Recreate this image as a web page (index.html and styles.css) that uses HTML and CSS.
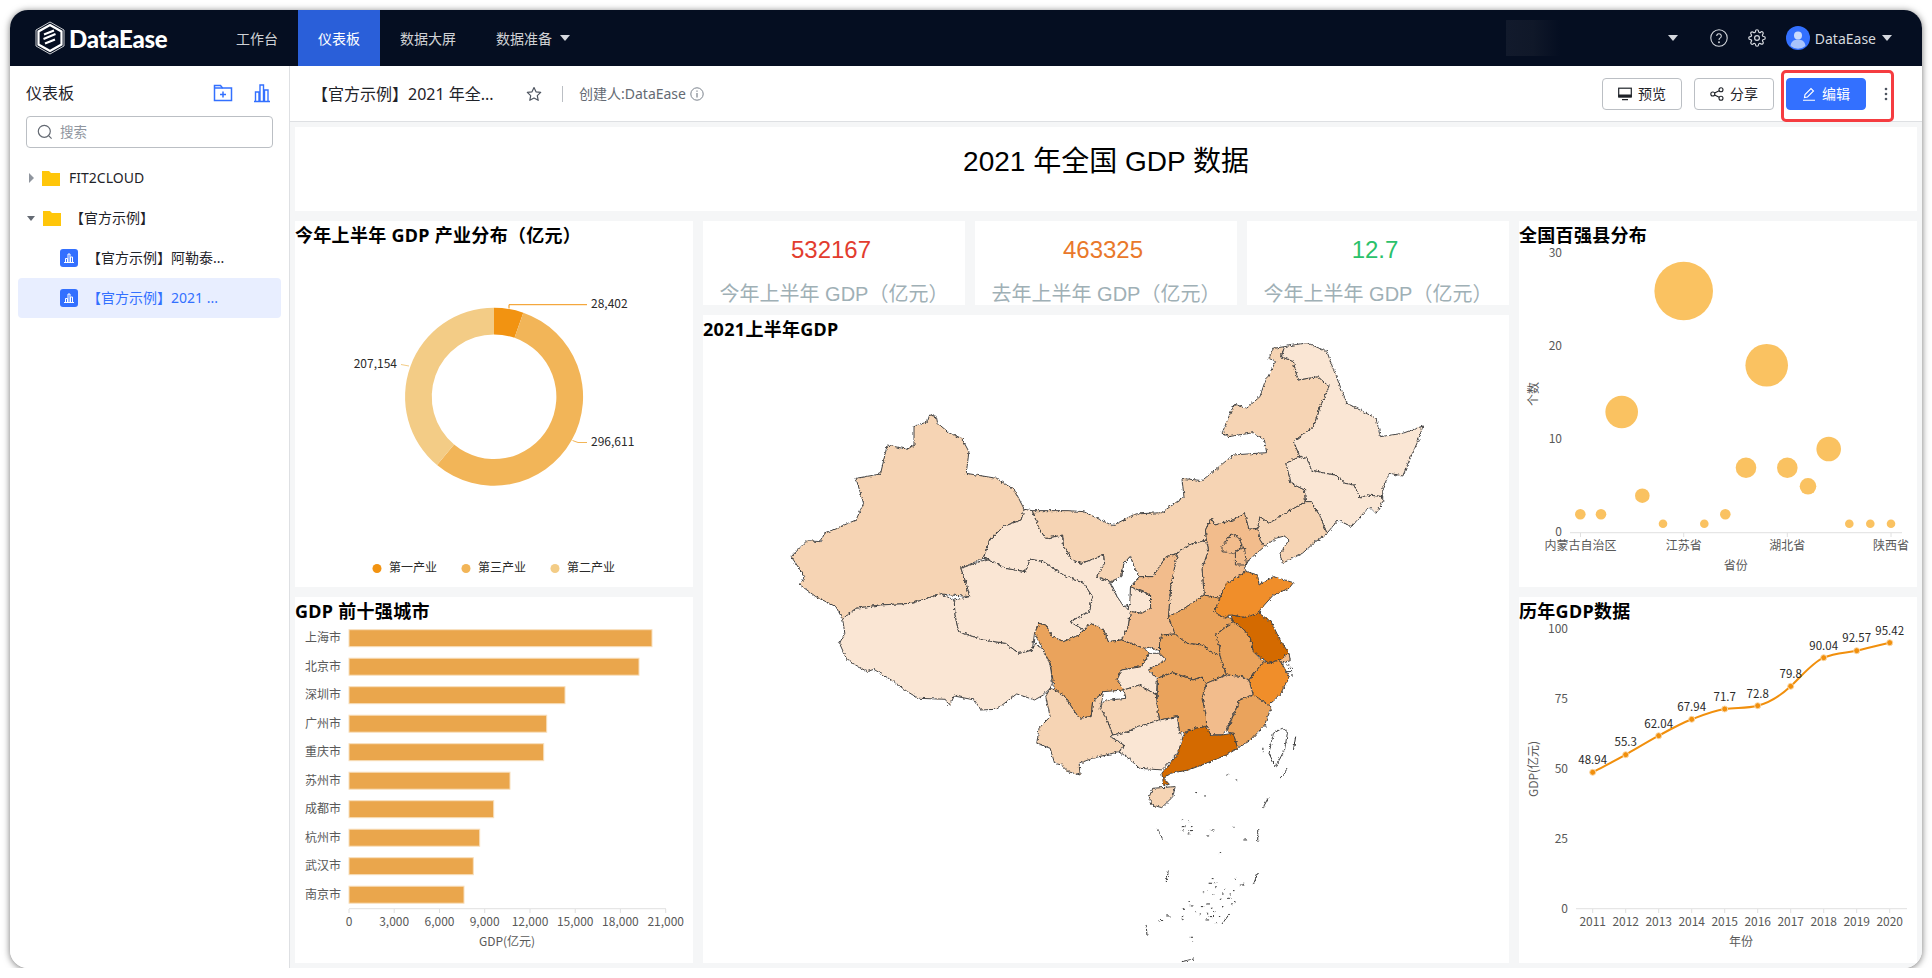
FILE: index.html
```html
<!DOCTYPE html>
<html lang="zh-CN">
<head>
    <meta charset="UTF-8">
    <title>DataEase 仪表板</title>
    <link rel="stylesheet" href="styles.css">
</head>
<body>
<div class="window">

    <!-- Top navigation -->
    <header class="header">
        <div class="logo">
            <svg width="30" height="34" viewBox="0 0 30 34" fill="none" stroke="#fff">
                <path d="M15 1 29 9v16l-14 8-14-8V9z" stroke-width=".8"/>
                <path d="M15 4 26.5 10.5v13L15 30 3.500 23.500v-13z" stroke-width="2.200"/>
                <path d="M9 13.500l10-4M8.500 18l12-5M10 22.500l10-4" stroke-width="2"/>
            </svg>
            <span class="logo-text">DataEase</span>
        </div>
        <nav class="nav">
            <a class="nav-item">工作台</a>
            <a class="nav-item active">仪表板</a>
            <a class="nav-item">数据大屏</a>
            <a class="nav-item">数据准备<i class="caret nav-caret"></i></a>
        </nav>
        <div class="header-right">
            <div class="blur-box"></div>
            <i class="caret org-caret"></i>
            <svg class="head-icon" width="18" height="18" viewBox="0 0 18 18" fill="none" stroke="#d5d8de" stroke-width="1.100">
                <circle cx="9" cy="9" r="8.200"/>
                <path d="M6.700 7a2.300 2.300 0 1 1 3.600 1.900c-.8.500-1.300 1-1.300 2"/>
                <circle cx="9" cy="13.200" r=".4"/>
            </svg>
            <svg class="head-icon" width="18" height="18" viewBox="0 0 24 24" fill="none" stroke="#d5d8de" stroke-width="1.600">
                <circle cx="12" cy="12" r="3.200"/>
                <path d="M19.400 15a1.650 1.650 0 0 0 .33 1.820l.06.06a2 2 0 0 1 0 2.830 2 2 0 0 1-2.830 0l-.06-.06a1.650 1.650 0 0 0-1.820-.33 1.650 1.650 0 0 0-1 1.510V21a2 2 0 0 1-2 2 2 2 0 0 1-2-2v-.09A1.650 1.650 0 0 0 9 19.400a1.650 1.650 0 0 0-1.820.33l-.06.06a2 2 0 0 1-2.830 0 2 2 0 0 1 0-2.830l.06-.06a1.650 1.650 0 0 0 .33-1.820 1.650 1.650 0 0 0-1.510-1H3a2 2 0 0 1-2-2 2 2 0 0 1 2-2h.09A1.650 1.650 0 0 0 4.600 9a1.650 1.650 0 0 0-.33-1.820l-.06-.06a2 2 0 0 1 0-2.830 2 2 0 0 1 2.830 0l.06.06a1.650 1.650 0 0 0 1.820.33H9a1.650 1.650 0 0 0 1-1.510V3a2 2 0 0 1 2-2 2 2 0 0 1 2 2v.09a1.650 1.650 0 0 0 1 1.510 1.650 1.650 0 0 0 1.820-.33l.06-.06a2 2 0 0 1 2.830 0 2 2 0 0 1 0 2.830l-.06.06a1.650 1.650 0 0 0-.33 1.820V9a1.650 1.650 0 0 0 1.510 1H21a2 2 0 0 1 2 2 2 2 0 0 1-2 2h-.09a1.650 1.650 0 0 0-1.510 1z"/>
            </svg>
            <svg class="avatar" width="24" height="24" viewBox="0 0 24 24">
                <circle cx="12" cy="12" r="12" fill="#3370ff"/>
                <circle cx="12" cy="9.500" r="4" fill="#c9dafc"/>
                <path d="M4.500 20c.5-4.500 3.500-6.500 7.500-6.500s7 2 7.500 6.500a12 12 0 0 1-15 0z" fill="#a9c4fb"/>
            </svg>
            <span class="user-name">DataEase</span>
            <i class="caret user-caret"></i>
        </div>
    </header>

    <div class="body-wrap">

        <!-- Left tree -->
        <aside class="sidebar">
            <div class="side-head">
                <span class="side-title">仪表板</span>
                <svg class="side-icon" width="20" height="18" viewBox="0 0 20 18" fill="none" stroke="#3370ff" stroke-width="1.500">
                    <path d="M1.500 16.500V1.500h6l2 2.500h9v12.500z"/>
                    <path d="M1.500 4h8M10 7.500v6M7 10.500h6"/>
                </svg>
                <svg class="side-icon chart-add" width="18" height="20" viewBox="0 0 18 20" fill="none" stroke="#3370ff" stroke-width="1.400">
                    <path d="M1 18.500h16M2.500 18.500V9h3.500v9.500M7 18.500V2h3.500v16.500M11.500 18.500V7H15v11.500"/>
                </svg>
            </div>
            <div class="search">
                <svg width="16" height="16" viewBox="0 0 16 16" fill="none" stroke="#646a73" stroke-width="1.200">
                    <circle cx="7.300" cy="7.300" r="6"/>
                    <path d="M11.800 11.800l2.800 2.800"/>
                </svg>
                <span class="search-text">搜索</span>
            </div>
            <ul class="tree">
                <li class="tree-row">
                    <i class="tree-caret right"></i>
                    <svg class="folder" width="18" height="16" viewBox="0 0 18 16"><path d="M0 1h7l2 2h9v13H0z" fill="#ffc60a"/></svg>
                    <span class="row-text">FIT2CLOUD</span>
                </li>
                <li class="tree-row">
                    <i class="tree-caret down"></i>
                    <svg class="folder" width="18" height="16" viewBox="0 0 18 16"><path d="M0 1h7l2 2h9v13H0z" fill="#ffc60a"/></svg>
                    <span class="row-text">【官方示例】</span>
                </li>
                <li class="tree-row child">
                    <svg width="18" height="18" viewBox="0 0 18 18"><rect width="18" height="18" rx="3" fill="#3370ff"/><path d="M4 13.500h10M5.500 13.500v-4h2v4M8 13.500v-8.500h2v8.500M10.500 13.500v-5.500h2v5.500" fill="none" stroke="#fff"/></svg>
                    <span class="row-text">【官方示例】阿勒泰...</span>
                </li>
                <li class="tree-row child selected">
                    <svg width="18" height="18" viewBox="0 0 18 18"><rect width="18" height="18" rx="3" fill="#3370ff"/><path d="M4 13.500h10M5.500 13.500v-4h2v4M8 13.500v-8.500h2v8.500M10.500 13.500v-5.500h2v5.500" fill="none" stroke="#fff"/></svg>
                    <span class="row-text">【官方示例】2021 ...</span>
                </li>
            </ul>
        </aside>

        <main class="content">
            <!-- Title bar -->
            <div class="topbar">
                <span class="board-name">【官方示例】2021 年全...</span>
                <svg class="star" width="16" height="16" viewBox="0 0 16 16" fill="none" stroke="#4e5560" stroke-width="1.200" stroke-linejoin="round">
                    <path d="M8 1.500l2 4.300 4.700.6-3.400 3.200.9 4.700L8 12l-4.200 2.300.9-4.700L1.300 6.400 6 5.800z"/>
                </svg>
                <span class="divider"></span>
                <span class="creator">创建人:DataEase</span>
                <svg class="info" width="14" height="14" viewBox="0 0 14 14" fill="none" stroke="#7b828c">
                    <circle cx="7" cy="7" r="6.200"/>
                    <path d="M7 6v4.500M7 3.500v1.300" stroke-width="1.200"/>
                </svg>
                <div class="actions">
                    <button class="btn">
                        <svg width="14" height="14" viewBox="0 0 14 14" fill="none" stroke="#1f2329" stroke-width="1.200"><rect x=".7" y="1.200" width="12.600" height="8.600"/><path d="M.7 8h12.600M4 12.600h6" /><path d="M1 8.500h12v1.500H1z" fill="#1f2329"/></svg>
                        <span class="btn-text">预览</span>
                    </button>
                    <button class="btn">
                        <svg width="14" height="14" viewBox="0 0 14 14" fill="none" stroke="#1f2329" stroke-width="1.100"><circle cx="2.800" cy="7" r="2"/><circle cx="11" cy="2.800" r="2"/><circle cx="11" cy="11.200" r="2"/><path d="M4.600 6.100l4.600-2.400M4.600 7.900l4.600 2.400"/></svg>
                        <span class="btn-text">分享</span>
                    </button>
                    <button class="btn primary">
                        <svg width="14" height="14" viewBox="0 0 14 14" fill="none" stroke="#fff" stroke-width="1.100"><path d="M2.500 10.500l.5-3 6-6 2.500 2.500-6 6zM1 13.300h12"/></svg>
                        <span class="btn-text">编辑</span>
                    </button>
                    <svg class="more" width="4" height="14" viewBox="0 0 4 14" fill="#4e5560"><circle cx="2" cy="2" r="1.300"/><circle cx="2" cy="7" r="1.300"/><circle cx="2" cy="12" r="1.300"/></svg>
                </div>
                <div class="red-mark"></div>
            </div>

            <!-- Dashboard canvas -->
            <div class="board">
                <div class="panel title-panel">2021 年全国 GDP 数据</div>

                <section class="panel tall">
                    <h3 class="panel-title">今年上半年 GDP 产业分布（亿元）</h3>
                    <svg class="chart" width="398" height="338" viewBox="295 249 398 338">
                        <path d="M494 307.700A89 89 0 0 1 523.300 312.650L514.500 337.860A62.300 62.300 0 0 0 494 334.400Z" fill="#f29311"/>
                        <path d="M523.300 312.650A89 89 0 1 1 437 465L454.100 444.500A62.300 62.300 0 1 0 514.500 337.860Z" fill="#f2b558"/>
                        <path d="M437 465A89 89 0 0 1 494 307.700L494 334.400A62.300 62.300 0 0 0 454.100 444.500Z" fill="#f3cc86"/>
                        <path d="M509 308.500V304.700H587" fill="none" stroke="#f29311"/>
                        <path d="M572.500 440.500L578 442.500H587" fill="none" stroke="#f2b558"/>
                        <path d="M409 366L401 364.500" fill="none" stroke="#f3cc86"/>
                        <text class="val" x="591" y="308">28,402</text>
                        <text class="val" x="591" y="446">296,611</text>
                        <text class="val end" x="397" y="368">207,154</text>
                        <circle cx="377" cy="568.500" r="4.500" fill="#f29311"/>
                        <text class="val" x="389" y="572">第一产业</text>
                        <circle cx="466" cy="568.500" r="4.500" fill="#f2b558"/>
                        <text class="val" x="478" y="572">第三产业</text>
                        <circle cx="555" cy="568.500" r="4.500" fill="#f3cc86"/>
                        <text class="val" x="567" y="572">第二产业</text>
                    </svg>
                </section>

                <div class="cards">
                    <div class="panel kpi"><div class="kpi-num red">532167</div><div class="kpi-label">今年上半年 GDP（亿元）</div></div>
                    <div class="panel kpi"><div class="kpi-num orange">463325</div><div class="kpi-label">去年上半年 GDP（亿元）</div></div>
                    <div class="panel kpi"><div class="kpi-num green">12.7</div><div class="kpi-label">今年上半年 GDP（亿元）</div></div>
                </div>

                <section class="panel tall">
                    <h3 class="panel-title">全国百强县分布</h3>
                    <svg class="chart" width="398" height="338" viewBox="1519 249 398 338">
                        <text class="axis end" x="1562" y="257">30</text>
                        <text class="axis end" x="1562" y="350">20</text>
                        <text class="axis end" x="1562" y="443">10</text>
                        <text class="axis end" x="1562" y="536">0</text>
                        <path class="axis-line" d="M1570 532.700H1902M1580.500 533V537M1683.700 533V537M1787.300 533V537M1891 533V537"/>
                        <g fill="#fac261">
                            <circle cx="1580.300" cy="514.300" r="5.300"/>
                            <circle cx="1601" cy="514.300" r="5.300"/>
                            <circle cx="1621.700" cy="412" r="16.300"/>
                            <circle cx="1642.300" cy="495.700" r="7.300"/>
                            <circle cx="1663" cy="523.700" r="4.300"/>
                            <circle cx="1683.700" cy="291" r="29.300"/>
                            <circle cx="1704.300" cy="523.700" r="4.300"/>
                            <circle cx="1725.300" cy="514.300" r="5.300"/>
                            <circle cx="1746" cy="467.700" r="10.300"/>
                            <circle cx="1766.700" cy="365.300" r="21.300"/>
                            <circle cx="1787.300" cy="467.700" r="10.300"/>
                            <circle cx="1808" cy="486.300" r="8.300"/>
                            <circle cx="1828.700" cy="449" r="12.300"/>
                            <circle cx="1849.300" cy="523.700" r="4.300"/>
                            <circle cx="1870.300" cy="523.700" r="4.300"/>
                            <circle cx="1891" cy="523.700" r="4.300"/>
                        </g>
                        <text class="axis mid" x="1580.500" y="550">内蒙古自治区</text>
                        <text class="axis mid" x="1683.700" y="550">江苏省</text>
                        <text class="axis mid" x="1787.300" y="550">湖北省</text>
                        <text class="axis mid" x="1891" y="550">陕西省</text>
                        <text class="axis mid" x="1735.700" y="570">省份</text>
                        <text class="axis mid" transform="translate(1538 394) rotate(-90)">个数</text>
                    </svg>
                </section>

                <section class="panel map-panel">
                    <h3 class="panel-title">2021上半年GDP</h3>
                    <svg class="chart" width="806" height="620" viewBox="703 343 806 620">
                        <defs>
                            <filter id="rough" filterUnits="userSpaceOnUse" x="703" y="343" width="806" height="620">
                                <feTurbulence type="fractalNoise" baseFrequency="0.35" numOctaves="3" seed="4"/>
                                <feDisplacementMap in="SourceGraphic" scale="3.500" xChannelSelector="R" yChannelSelector="G"/>
                            </filter>
                        </defs>
                        <g filter="url(#rough)">
                        <g class="china" transform="translate(760 320) scale(.4464 .3333)">
                            <polygon class="c2" points="380,285 395,290 398,310 425,340 452,355 468,395 462,460 530,475 570,510 592,568 585,600 545,620 515,660 500,715 450,745 462,790 470,830 405,822 340,850 270,855 215,865 185,897 170,860 125,830 90,795 100,770 70,710 105,662 135,665 145,640 215,600 232,550 215,475 270,462 285,375 330,388 345,375 345,320 375,305"/>
                            <polygon class="c1" points="185,897 215,865 270,855 340,850 405,822 435,840 437,885 440,905 445,935 500,960 550,970 580,1000 610,990 618,968 645,1010 652,1050 655,1090 650,1105 635,1125 615,1140 575,1122 530,1168 495,1170 480,1140 435,1128 425,1158 415,1138 355,1135 330,1115 300,1085 255,1048 240,1055 195,1020 178,970 190,940"/>
                            <polygon class="c1" points="450,745 510,717 550,745 595,755 605,717 635,725 680,765 725,790 745,830 738,875 695,905 725,930 715,945 680,965 655,950 640,915 625,910 615,940 610,990 580,1000 550,970 500,960 445,935 437,885 435,840 470,830 462,790"/>
                            <polygon class="c1" points="592,568 610,572 625,625 640,655 678,645 680,680 700,720 720,730 770,705 772,730 755,770 782,785 800,830 825,870 830,800 875,825 875,865 855,880 830,875 825,920 810,960 780,965 770,930 740,910 715,945 725,930 695,905 738,875 745,830 725,790 680,765 635,725 605,717 595,755 550,745 510,717 500,715 515,660 545,620 585,600"/>
                            <polygon class="c0" points="785,785 810,770 815,730 830,708 838,740 850,770 830,800 828,855 815,860 800,830"/>
                            <polygon class="c2" points="610,572 690,572 725,575 790,617 840,582 900,578 950,530 945,475 990,482 1015,455 1060,405 1135,398 1130,360 1105,338 1050,350 1035,340 1062,252 1090,265 1120,230 1130,190 1155,125 1140,115 1150,85 1175,80 1168,110 1195,125 1205,180 1250,170 1275,200 1255,260 1240,320 1195,365 1210,410 1178,430 1190,490 1220,510 1222,545 1190,570 1140,610 1120,590 1115,625 1095,628 1085,578 1060,600 1020,615 1010,595 998,630 1000,660 960,675 935,700 910,710 880,770 850,770 838,740 830,708 815,730 810,770 785,785 755,770 772,730 770,705 720,730 700,720 680,680 678,645 640,655 625,625"/>
                            <polygon class="c1" points="1175,80 1225,68 1270,95 1285,150 1315,250 1380,295 1390,350 1440,340 1485,318 1475,360 1455,420 1440,468 1410,460 1395,505 1395,530 1360,525 1345,535 1330,495 1310,490 1290,465 1265,460 1235,450 1225,415 1210,410 1195,365 1240,320 1255,260 1275,200 1250,170 1205,180 1195,125 1168,110"/>
                            <polygon class="c1" points="1178,430 1210,410 1225,415 1235,450 1265,460 1290,465 1310,490 1330,495 1345,535 1360,525 1395,530 1395,545 1380,580 1365,560 1325,620 1295,600 1270,640 1255,590 1235,545 1222,545 1220,510 1190,490"/>
                            <polygon class="c2" points="1140,610 1190,570 1222,545 1235,545 1255,590 1270,640 1240,670 1215,700 1170,730 1165,700 1185,660 1175,648 1155,655 1130,680 1120,660 1115,625 1120,590"/>
                            <polygon class="c3" points="998,630 1010,595 1020,615 1060,600 1085,578 1095,628 1115,625 1120,660 1130,680 1095,720 1085,745 1090,755 1045,790 1030,835 995,825 990,745 1005,690 1000,660"/>
                            <polygon class="c3" points="1035,680 1055,642 1075,655 1080,680 1060,700 1035,695"/>
                            <polygon class="c3" points="1065,695 1085,680 1090,735 1065,735"/>
                            <polygon class="c2" points="935,700 960,675 1000,660 1005,690 990,745 995,825 945,870 915,890 920,800"/>
                            <polygon class="c3" points="880,770 910,710 935,700 920,800 915,890 930,942 900,945 895,975 900,995 872,982 860,985 810,960 825,920 830,875 855,880 875,865 875,825 830,800 850,770"/>
                            <polygon class="c4" points="915,890 945,870 995,825 1030,835 1018,875 1055,895 1060,905 1040,925 1020,945 1030,980 1030,1005 1010,995 990,975 955,970 930,942"/>
                            <polygon class="c4" points="900,945 930,942 955,970 990,975 1010,995 1030,1005 1035,1025 1045,1065 1000,1090 990,1070 970,1080 925,1058 890,1075 870,1050 910,1020 895,1000 895,970"/>
                            <polygon class="c4" points="1060,905 1085,930 1100,960 1105,995 1128,1025 1095,1080 1080,1070 1045,1065 1035,1025 1030,1005 1030,980 1020,945 1040,925"/>
                            <polygon class="c6" points="1055,885 1085,892 1118,880 1145,905 1165,960 1185,1000 1165,1020 1140,1030 1105,995 1100,960 1085,930 1060,905"/>
                            <polygon class="c3" points="1165,1020 1185,1000 1188,1022 1170,1030"/>
                            <polygon class="c5" points="1030,835 1045,790 1090,755 1115,765 1118,795 1150,770 1195,788 1185,805 1150,825 1120,870 1118,880 1085,892 1055,885 1040,895 1018,875"/>
                            <polygon class="c5" points="1128,1025 1140,1030 1165,1020 1185,1070 1165,1125 1140,1155 1105,1125 1095,1080"/>
                            <polygon class="c3" points="1045,1065 1080,1070 1095,1080 1105,1125 1075,1140 1045,1230 1035,1245 1010,1245 1000,1220 1000,1190 990,1135 1000,1090"/>
                            <polygon class="c4" points="1105,1125 1140,1155 1145,1165 1130,1215 1100,1260 1070,1285 1060,1240 1045,1235 1075,1140"/>
                            <polygon class="c4" points="890,1075 925,1058 970,1080 990,1070 1000,1090 990,1135 1000,1190 1000,1220 975,1225 955,1235 940,1240 935,1190 895,1200 890,1160"/>
                            <polygon class="c4" points="615,940 625,910 640,915 655,950 680,965 715,945 740,910 770,930 780,965 810,960 860,985 872,1000 855,1040 810,1050 800,1080 815,1110 770,1115 745,1145 742,1190 715,1195 680,1125 660,1110 650,1030"/>
                            <polygon class="c1" points="872,1000 895,1000 910,1020 870,1050 890,1075 888,1125 850,1095 815,1110 800,1080 810,1050 855,1040"/>
                            <polygon class="c2" points="815,1110 850,1095 888,1125 890,1160 895,1200 860,1215 845,1220 825,1235 790,1245 775,1190 760,1165 770,1145 785,1140 820,1135"/>
                            <polygon class="c2" points="650,1105 660,1110 680,1125 715,1195 742,1190 745,1145 770,1115 762,1165 775,1190 790,1245 785,1250 815,1275 805,1295 745,1315 715,1330 717,1365 690,1355 675,1335 660,1330 650,1285 620,1270 625,1225 650,1190 640,1130"/>
                            <polygon class="c1" points="790,1245 825,1235 845,1220 860,1215 895,1200 935,1190 940,1240 950,1250 935,1300 900,1350 850,1345 830,1320 805,1295 815,1275 785,1250"/>
                            <polygon class="c6" points="950,1240 975,1225 1000,1220 1010,1245 1035,1245 1060,1240 1070,1285 1045,1305 990,1335 960,1350 920,1360 905,1375 917,1393 905,1395 900,1360 935,1305"/>
                            <polygon class="c2" points="880,1405 930,1400 925,1430 900,1463 878,1455 872,1430"/>
                            <polygon class="c0" points="1150,1240 1170,1225 1182,1235 1175,1290 1155,1340 1140,1300"/>
                            <path class="isles" d="M1200 1250L1195 1290M1182 1345L1165 1375M1138 1435L1125 1468M890 1525L903 1560M1115 1530V1565M915 1652L910 1685M1115 1660L1105 1695M1050 1785L1035 1812M865 1815L867 1848M945 1925L972 1917"/>
                            <path class="dots" d="M1180 1035h6M1185 1045h8M1180 1055h12M1188 1065h6M1130 1218h5M1115 1235h4M1125 1285h3M1125 1295h3M1045 1365h4M1065 1380h4M975 1418h4M995 1428h4M945 1500h3M960 1505h4M945 1520h6M965 1520h4M945 1530h4M962 1532h6M958 1542h4M1010 1530h8M1000 1548h6M1060 1522h3M1085 1560h4M1030 1598h3M1012 1676h4M1005 1690h8M1000 1710h3M1020 1700h3M1035 1722h4M1058 1712h5M1075 1695h8M1015 1725h3M1048 1735h6M1000 1752h8M1055 1752h3M965 1758h6M945 1768h6M910 1788h10M895 1802h8M945 1790h3M1005 1790h12M998 1800h8M1020 1808h3M965 1852h3M968 1862h3M968 1975h4M1062 1678h3M1082 1690h3M1018 1688h4M992 1716h3M1040 1708h3M1052 1722h3M1030 1738h3M1062 1745h3M990 1760h5M1010 1765h4M1035 1760h3M975 1775h3M985 1782h3M960 1742h3M1000 1780h4M1028 1790h3M945 1798h4M1015 1775h3"/>
                        </g>
                        </g>
                    </svg>
                </section>

                <section class="panel">
                    <h3 class="panel-title">GDP 前十强城市</h3>
                    <svg class="chart" width="398" height="338" viewBox="295 625 398 338">
                        <g class="bars">
                            <rect x="349" y="629.700" width="303" height="17"/>
                            <rect x="349" y="658.200" width="290" height="17"/>
                            <rect x="349" y="686.700" width="216" height="17"/>
                            <rect x="349" y="715.200" width="197.700" height="17"/>
                            <rect x="349" y="743.700" width="194.700" height="17"/>
                            <rect x="349" y="772.200" width="161" height="17"/>
                            <rect x="349" y="800.700" width="144.700" height="17"/>
                            <rect x="349" y="829.200" width="130.700" height="17"/>
                            <rect x="349" y="857.700" width="124.300" height="17"/>
                            <rect x="349" y="886.200" width="115" height="17"/>
                        </g>
                        <g class="axis end">
                            <text x="341" y="642">上海市</text>
                            <text x="341" y="671">北京市</text>
                            <text x="341" y="699">深圳市</text>
                            <text x="341" y="728">广州市</text>
                            <text x="341" y="756">重庆市</text>
                            <text x="341" y="785">苏州市</text>
                            <text x="341" y="813">成都市</text>
                            <text x="341" y="842">杭州市</text>
                            <text x="341" y="870">武汉市</text>
                            <text x="341" y="899">南京市</text>
                        </g>
                        <path class="axis-line" d="M349 908.700H666M349 909V913M394.200 909V913M439.500 909V913M484.700 909V913M530 909V913M575.200 909V913M620.400 909V913M665.700 909V913"/>
                        <g class="axis mid">
                            <text x="349" y="926">0</text>
                            <text x="394.200" y="926">3,000</text>
                            <text x="439.500" y="926">6,000</text>
                            <text x="484.700" y="926">9,000</text>
                            <text x="530" y="926">12,000</text>
                            <text x="575.200" y="926">15,000</text>
                            <text x="620.400" y="926">18,000</text>
                            <text x="665.700" y="926">21,000</text>
                            <text x="507" y="946">GDP(亿元)</text>
                        </g>
                    </svg>
                </section>

                <section class="panel">
                    <h3 class="panel-title">历年GDP数据</h3>
                    <svg class="chart" width="398" height="338" viewBox="1519 625 398 338">
                        <g class="axis end">
                            <text x="1568" y="633">100</text>
                            <text x="1568" y="703">75</text>
                            <text x="1568" y="773">50</text>
                            <text x="1568" y="843">25</text>
                            <text x="1568" y="913">0</text>
                        </g>
                        <path class="axis-line" d="M1576 908.700H1907M1592.700 909V913M1625.700 909V913M1658.700 909V913M1691.700 909V913M1724.700 909V913M1757.700 909V913M1790.700 909V913M1823.700 909V913M1856.700 909V913M1889.700 909V913"/>
                        <path d="M1592.700 772.300C1603.700 766.400 1614.700 761 1625.700 754.700C1636.700 748.400 1647.700 741.700 1658.700 735.700C1669.700 729.700 1680.700 723.600 1691.700 719.300C1702.700 715 1713.700 710.600 1724.700 709C1735.700 707.400 1746.700 708.500 1757.700 705.700C1768.700 702.900 1779.700 696.500 1790.700 686.300C1801.700 676 1812.700 662.500 1823.700 657.700C1834.700 653 1845.700 653 1856.700 650.700C1867.700 648 1878.700 645 1889.700 642.700" fill="none" stroke="#f18f0c" stroke-width="2"/>
                        <g class="points">
                            <circle cx="1592.700" cy="772.300" r="3"/>
                            <circle cx="1625.700" cy="754.700" r="3"/>
                            <circle cx="1658.700" cy="735.700" r="3"/>
                            <circle cx="1691.700" cy="719.300" r="3"/>
                            <circle cx="1724.700" cy="709" r="3"/>
                            <circle cx="1757.700" cy="705.700" r="3"/>
                            <circle cx="1790.700" cy="686.300" r="3"/>
                            <circle cx="1823.700" cy="657.700" r="3"/>
                            <circle cx="1856.700" cy="650.700" r="3"/>
                            <circle cx="1889.700" cy="642.700" r="3"/>
                        </g>
                        <g class="val mid small">
                            <text x="1592.700" y="764">48.94</text>
                            <text x="1625.700" y="746">55.3</text>
                            <text x="1658.700" y="728">62.04</text>
                            <text x="1691.700" y="711">67.94</text>
                            <text x="1724.700" y="701">71.7</text>
                            <text x="1757.700" y="698">72.8</text>
                            <text x="1790.700" y="678">79.8</text>
                            <text x="1823.700" y="650">90.04</text>
                            <text x="1856.700" y="642">92.57</text>
                            <text x="1889.700" y="635">95.42</text>
                        </g>
                        <g class="axis mid">
                            <text x="1592.700" y="926">2011</text>
                            <text x="1625.700" y="926">2012</text>
                            <text x="1658.700" y="926">2013</text>
                            <text x="1691.700" y="926">2014</text>
                            <text x="1724.700" y="926">2015</text>
                            <text x="1757.700" y="926">2016</text>
                            <text x="1790.700" y="926">2017</text>
                            <text x="1823.700" y="926">2018</text>
                            <text x="1856.700" y="926">2019</text>
                            <text x="1889.700" y="926">2020</text>
                            <text x="1741" y="946">年份</text>
                            <text transform="translate(1538 769) rotate(-90)">GDP(亿元)</text>
                        </g>
                    </svg>
                </section>
            </div>
        </main>
    </div>
</div>
</body>
</html>
```

FILE: styles.css
```css
* {
    margin: 0;
    padding: 0;
    box-sizing: border-box;
}
body {
    background: #fff;
    font-family: "Noto Sans", "Noto Sans CJK SC", sans-serif;
    font-size: 14px;
    color: #1f2329;
}
.window {
    margin: 10px 0 0 10px;
    width: 1912px;
    height: 958px;
    border-radius: 18px;
    overflow: hidden;
    box-shadow: 0 1px 7px rgba(0, 0, 0, 0.55);
    display: flex;
    flex-direction: column;
}

/* Header */
.header {
    height: 56px;
    background: #050e21;
    color: #fff;
    display: flex;
    align-items: center;
    flex-shrink: 0;
}
.logo {
    display: flex;
    align-items: center;
    margin-left: 25px;
    width: 181px;
    gap: 4px;
}
.logo-text {
    font-family: Lato, sans-serif;
    font-weight: 900;
    font-size: 24px;
    letter-spacing: -0.3px;
}
.nav { display: flex; height: 100%; }
.nav-item {
    display: flex;
    align-items: center;
    padding: 0 20px;
    color: rgba(255, 255, 255, 0.82);
}
.nav-item.active { background: #2a5fd9; color: #fff; }
.caret {
    display: inline-block;
    width: 0;
    height: 0;
    border-left: 5px solid transparent;
    border-right: 5px solid transparent;
    border-top: 6px solid #d5d8de;
}
.nav-caret { margin-left: 8px; }
.header-right {
    margin-left: auto;
    padding-right: 30px;
    display: flex;
    align-items: center;
}
.blur-box {
    width: 54px;
    height: 36px;
    background: linear-gradient(90deg, #121a2c, #101829 50%, #050e21);
    margin-right: 108px;
}
.org-caret { margin-right: 32px; }
.head-icon { margin-right: 20px; }
.avatar { margin-right: 5px; }
.user-name { color: #d5d8de; font-size: 14px; margin-right: 6px; }

/* Layout below header */
.body-wrap { flex: 1; display: flex; min-height: 0; }

/* Sidebar */
.sidebar {
    width: 280px;
    flex-shrink: 0;
    background: #fff;
    border-right: 1px solid #dee0e3;
    padding: 14px 8px 0;
}
.side-head {
    display: flex;
    align-items: center;
    height: 26px;
    padding: 0 9px 0 8px;
}
.side-title { font-size: 16px; flex: 1; padding-bottom: 2px; }
.side-icon { margin-left: 20px; }
.chart-add { margin-right: 1px; }
.search {
    margin: 10px 8px 10px;
    width: 247px;
    height: 32px;
    border: 1px solid #bbbfc4;
    border-radius: 4px;
    display: flex;
    align-items: center;
    padding-left: 10px;
    gap: 7px;
}
.search-text { color: #8f959e; font-size: 13.500px; padding-bottom: 2px; }
.tree { list-style: none; }
.tree-row {
    display: flex;
    align-items: center;
    height: 40px;
    padding-left: 6px;
    border-radius: 4px;
}
.tree-row.child { padding-left: 42px; gap: 9px; }
.tree-row.selected { background: #e8eeff; color: #3370ff; }
.row-text { padding-bottom: 2px; }
.tree-caret {
    display: flex;
    border-style: solid;
    border-color: transparent;
}
.tree-caret.right {
    width: 0;
    height: 0;
    border-width: 5px 0 5px 5px;
    border-left-color: #8f959e;
    margin: 0 1px 0 5px;
}
.tree-caret.down {
    width: 0;
    height: 0;
    border-width: 5px 4px 0;
    border-top-color: #646a73;
    margin: 0 1px 0 3px;
}
.folder { margin: 0 9px 0 7px; }

/* Top bar */
.content { flex: 1; display: flex; flex-direction: column; min-width: 0; background: #f5f6f7; }
.topbar {
    height: 56px;
    flex-shrink: 0;
    background: #fff;
    border-bottom: 1px solid #dee0e3;
    display: flex;
    align-items: center;
    padding-left: 22px;
    padding-right: 34px;
    position: relative;
}
.board-name {
    font-size: 16px;
    width: 190px;
    white-space: nowrap;
    padding-bottom: 2px;
}
.star { margin-left: 24px; }
.divider { width: 1px; height: 16px; background: #bbbfc4; margin-left: 20px; }
.creator { margin-left: 16px; color: #646a73; font-size: 14px; padding-bottom: 2px; }
.info { margin-left: 4px; }
.actions { margin-left: auto; display: flex; align-items: center; gap: 12px; }
.btn {
    width: 80px;
    height: 32px;
    background: #fff;
    border: 1px solid #bbbfc4;
    border-radius: 4px;
    font: inherit;
    color: #1f2329;
    display: flex;
    align-items: center;
    justify-content: center;
    gap: 6px;
}
.btn-text { padding-bottom: 2px; }
.btn.primary { background: #3370ff; border-color: #3370ff; color: #fff; }
.more { margin-left: 6px; }
.red-mark {
    position: absolute;
    left: 1491px;
    top: 4px;
    width: 113px;
    height: 52px;
    border: 3px solid #f53c40;
    border-radius: 5px;
}

/* Dashboard grid */
.board {
    flex: 1;
    display: grid;
    grid-template-columns: 398px 806px 398px;
    grid-template-rows: 84px 84px 272px 366px;
    gap: 10px;
    padding: 5px;
}
.panel { background: #fff; overflow: hidden; }
.title-panel {
    grid-column: 1 / 4;
    display: flex;
    align-items: center;
    justify-content: center;
    padding-bottom: 20px;
    font-family: "Liberation Sans", "Noto Sans CJK SC", sans-serif;
    font-size: 28px;
    color: #000;
}
.tall { grid-row: span 2; }
.map-panel { grid-row: span 2; }
.panel-title {
    font-family: "Noto Sans", "Noto Sans CJK SC", sans-serif;
    font-size: 18px;
    font-weight: 700;
    line-height: 28px;
    height: 28px;
    color: #000;
    letter-spacing: 0.3px;
}
.chart { display: block; overflow: visible; }
.cards { display: flex; gap: 10px; }
.kpi { flex: 1; text-align: center; font-family: "Liberation Sans", "Noto Sans CJK SC", sans-serif; }
.kpi-num { font-size: 24px; line-height: 36px; padding: 11px 6px 0 0; }
.kpi-num.red { color: #e23c2e; }
.kpi-num.orange { color: #e9782a; }
.kpi-num.green { color: #2bc16b; }
.kpi-label { font-size: 20px; line-height: 30px; margin-top: 11px; color: #9fb0b6; white-space: nowrap; }

/* Chart text */
.chart text { font-family: "Noto Sans CJK SC", sans-serif; font-size: 12px; }
.val { fill: #2a2a2a; }
.axis { fill: #595959; }
.end { text-anchor: end; }
.mid { text-anchor: middle; }
.small text { font-size: 11.500px; }
.axis-line { fill: none; stroke: #e0e0e0; }
.bars rect { fill: #eaa64c; stroke: #f8dfbc; stroke-width: 1; }
.points circle { fill: #f18f0c; stroke: #fbd9a9; stroke-width: 1; }

/* Map */
.china polygon { stroke: #444; stroke-width: 1; vector-effect: non-scaling-stroke; stroke-linejoin: round; }
.china .isles, .china .dots { fill: none; stroke: #333; stroke-width: 1; vector-effect: non-scaling-stroke; }
.c0 { fill: #fff; }
.c1 { fill: #fae6d4; }
.c2 { fill: #f6d4b4; }
.c3 { fill: #f2bc8c; }
.c4 { fill: #eaa35c; }
.c5 { fill: #f08e2c; }
.c6 { fill: #d46b00; }
```
